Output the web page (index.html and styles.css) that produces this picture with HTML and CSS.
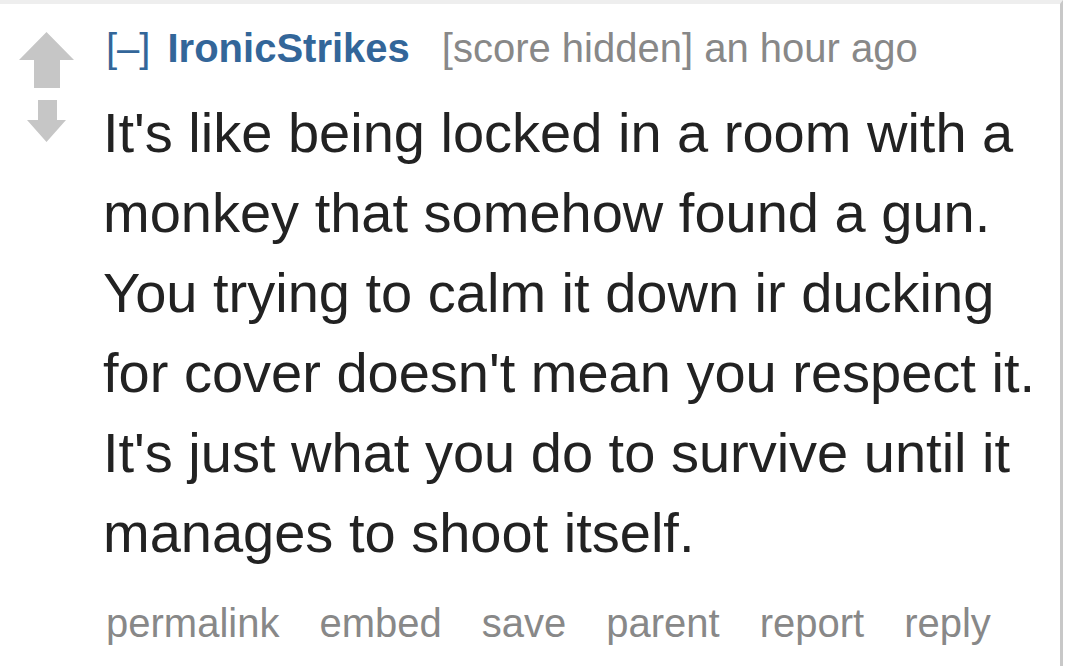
FILE: index.html
```html
<!DOCTYPE html>
<html>
<head>
<meta charset="utf-8">
<link rel="stylesheet" href="styles.css">
</head>
<body>
<div class="page">
  <div class="comment">
    <div class="votes">
      <svg class="arrow-up" width="55" height="56" viewBox="0 0 55 56"><polygon points="27.5,0 55,28 41,28 41,56 15,56 15,28 0,28" fill="#c6c6c6"/></svg>
      <svg class="arrow-down" width="39" height="42" viewBox="0 0 39 42"><polygon points="11,0 30,0 30,20 39,20 19.5,42 0,20 11,20" fill="#c6c6c6"/></svg>
    </div>
    <div class="entry">
      <p class="tagline"><span class="expand">[–]</span><span class="author">IronicStrikes</span><span class="score">[score hidden] an hour ago</span></p>
      <div class="md">It's like being locked in a room with a monkey that somehow found a gun. You trying to calm it down ir ducking for cover doesn't mean you respect it. It's just what you do to survive until it manages to shoot itself.</div>
      <ul class="buttons">
        <li>permalink</li>
        <li>embed</li>
        <li>save</li>
        <li>parent</li>
        <li>report</li>
        <li>reply</li>
      </ul>
    </div>
  </div>
</div>
</body>
</html>
```

FILE: styles.css
```css
html, body {
  margin: 0;
  padding: 0;
  background: #fff;
}
.page {
  width: 1063px;
  height: 666px;
  border-right: 3px solid #c8c8c8;
  border-top: 4px solid #eeeeee;
  box-sizing: border-box;
  overflow: hidden;
  font-family: "Liberation Sans", Arial, sans-serif;
}
.comment {
  display: flex;
}
.votes {
  width: 93px;
  display: flex;
  flex-direction: column;
  align-items: center;
  padding-top: 28px;
  gap: 12px;
  flex-shrink: 0;
}
.votes svg {
  display: block;
  filter: blur(0.6px);
}
.entry {
  margin-left: 10px;
  padding-top: 20px;
}
.tagline {
  margin: 0;
  font-size: 40px;
  line-height: 48px;
  color: #888;
  white-space: nowrap;
}
.expand {
  color: #369;
  margin-left: 3px;
  margin-right: 17px;
}
.author {
  color: #369;
  font-weight: bold;
  margin-right: 32px;
}
.md {
  margin-top: 21px;
  font-size: 56px;
  line-height: 80px;
  color: #222;
  width: 940px;
}
.buttons {
  list-style: none;
  margin: 26px 0 0;
  padding: 0 0 0 3px;
  display: flex;
  gap: 40px;
  font-size: 40px;
  line-height: 48px;
  color: #888;
}
```
